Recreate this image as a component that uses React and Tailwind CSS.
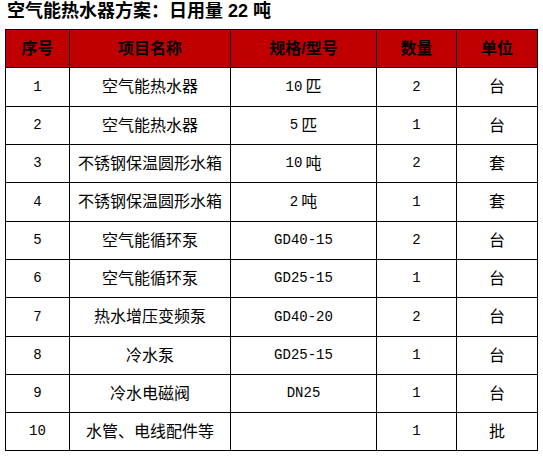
import React from 'react'

const cjk = '"Liberation Sans", "Noto Sans CJK SC", sans-serif'
const mono = '"Liberation Mono", "Noto Sans CJK SC", monospace'

const cols = ['w-[64px]', 'w-[161px]', 'w-[146px]', 'w-[80px]', 'w-[81px]']

const rows = [
  ['1', '空气能热水器', '10匹', '2', '台', 'h-[39px]'],
  ['2', '空气能热水器', '5匹', '1', '台', 'h-[38px]'],
  ['3', '不锈钢保温圆形水箱', '10吨', '2', '套', 'h-[38px]'],
  ['4', '不锈钢保温圆形水箱', '2吨', '1', '套', 'h-[39px]'],
  ['5', '空气能循环泵', 'GD40-15', '2', '台', 'h-[38px]'],
  ['6', '空气能循环泵', 'GD25-15', '1', '台', 'h-[38px]'],
  ['7', '热水增压变频泵', 'GD40-20', '2', '台', 'h-[39px]'],
  ['8', '冷水泵', 'GD25-15', '1', '台', 'h-[38px]'],
  ['9', '冷水电磁阀', 'DN25', '1', '台', 'h-[38px]'],
  ['10', '水管、电线配件等', '', '1', '批', 'h-[38px]'],
]

// ASCII runs get the narrow mono face, like SimSun's half-width digits
const Mixed = ({ text }) => {
  const parts = text.match(/[\x20-\x7e]+|[^\x20-\x7e]+/g) || []
  return parts.map((p, i) =>
    /^[\x20-\x7e]+$/.test(p) ? (
      <span
        key={i}
        className={i < parts.length - 1 ? 'text-[14px] mr-[3px]' : 'text-[14px]'}
        style={{ fontFamily: mono }}
      >
        {p}
      </span>
    ) : (
      <span key={i}>{p}</span>
    )
  )
}

const App = () => {
  return (
    <div className="w-[543px] h-[457px] bg-white text-black" style={{ fontFamily: cjk }}>
      <div className="h-[29px] pl-[7px] text-[18px] leading-[22px] font-bold">
        空气能热水器方案：日用量 22 吨
      </div>
      <div className="ml-[5px] w-[533px] border-t border-l border-black">
        <div className="flex h-[38px] bg-[#c00000] font-bold text-[16px]">
          {['序号', '项目名称', '规格/型号', '数量', '单位'].map((h, i) => (
            <div
              key={h}
              className={`${cols[i]} flex items-center justify-center border-r border-b border-black`}
            >
              {h}
            </div>
          ))}
        </div>
        {rows.map((r) => (
          <div key={r[0]} className={`flex ${r[5]} text-[16px]`}>
            {r.slice(0, 5).map((c, i) => (
              <div
                key={i}
                className={`${cols[i]} flex items-center justify-center border-r border-b border-black`}
              >
                <Mixed text={c} />
              </div>
            ))}
          </div>
        ))}
      </div>
    </div>
  )
}

export default App
